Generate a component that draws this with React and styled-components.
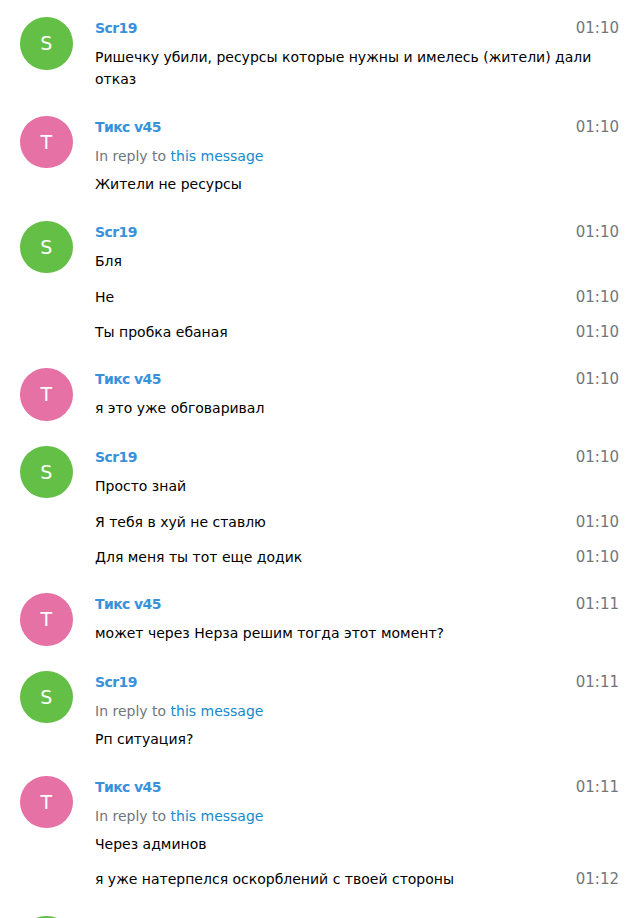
import React from "react";
import styled, { createGlobalStyle } from "styled-components";

const GlobalStyle = createGlobalStyle`
   body {
      margin: 0;
      background: #fff;
      font: 14px/22.5px "DejaVu Sans", "Noto Sans", sans-serif;
      color: #000;
   }
`;

const messages = [
   { from: "Scr19", color: "#64bf47", time: "01:10", text: "Ришечку убили, ресурсы которые нужны и имелесь (жители) дали отказ" },
   { from: "Тикс v45", color: "#e671a5", time: "01:10", reply: true, text: "Жители не ресурсы" },
   { from: "Scr19", color: "#64bf47", time: "01:10", text: "Бля" },
   { joined: true, time: "01:10", text: "Не" },
   { joined: true, time: "01:10", text: "Ты пробка ебаная" },
   { from: "Тикс v45", color: "#e671a5", time: "01:10", text: "я это уже обговаривал" },
   { from: "Scr19", color: "#64bf47", time: "01:10", text: "Просто знай" },
   { joined: true, time: "01:10", text: "Я тебя в хуй не ставлю" },
   { joined: true, time: "01:10", text: "Для меня ты тот еще додик" },
   { from: "Тикс v45", color: "#e671a5", time: "01:11", text: "может через Нерза решим тогда этот момент?" },
   { from: "Scr19", color: "#64bf47", time: "01:11", reply: true, text: "Рп ситуация?" },
   { from: "Тикс v45", color: "#e671a5", time: "01:11", reply: true, text: "Через админов" },
   { joined: true, time: "01:12", text: "я уже натерпелся оскорблений с твоей стороны" },
   // next message, only the top of its userpic shows
   { from: "Scr19", color: "#64bf47", partial: true },
];

const initials = (name) => (name[0] === "Т" ? "T" : name[0]);

const App = () => {
   return (
      <>
         <GlobalStyle />
         <History>
            {messages.map((m, index) => (
               <Message key={index} $joined={m.joined}>
                  {!m.joined && <Userpic $color={m.color}>{m.partial ? "" : initials(m.from)}</Userpic>}
                  {!m.partial && (
                     <Body $joined={m.joined}>
                        {m.joined ? (
                           <TextRow>
                              <Text>{m.text}</Text>
                              <Time>{m.time}</Time>
                           </TextRow>
                        ) : (
                           <>
                              <FromRow>
                                 <FromName>{m.from}</FromName>
                                 <Time>{m.time}</Time>
                              </FromRow>
                              {m.reply && (
                                 <ReplyTo>
                                    In reply to <a href="#">this message</a>
                                 </ReplyTo>
                              )}
                              <Text>{m.text}</Text>
                           </>
                        )}
                     </Body>
                  )}
               </Message>
            ))}
         </History>
      </>
   );
};

const History = styled.div`
   padding: 4.5px 25px 0 20px;
   height: 918px;
   overflow: hidden;
   box-sizing: border-box;
`;

const Message = styled.div`
   display: flex;
   align-items: flex-start;
   padding: 12.5px 0;
   margin-top: ${(p) => (p.$joined ? "-12.5px" : "0")};
`;

const Userpic = styled.div`
   flex: 0 0 52.5px;
   width: 52.5px;
   height: 52.5px;
   border-radius: 50%;
   background-color: ${(p) => p.$color};
   color: #fff;
   display: flex;
   align-items: center;
   justify-content: center;
   font-size: 19px;
   line-height: 1;
   margin-right: 22.5px;
`;

const Body = styled.div`
   flex: 1;
   min-width: 0;
   margin-left: ${(p) => (p.$joined ? "75px" : "0")};
`;

const FromRow = styled.div`
   display: flex;
   justify-content: space-between;
   padding-bottom: 6.25px;
`;

const FromName = styled.div`
   color: #3892db;
   font-weight: 700;
   letter-spacing: -0.6px;
`;

const Time = styled.div`
   color: #70777b;
   flex: none;
   margin-left: 12px;
   font-size: 15px;
`;

const ReplyTo = styled.div`
   color: #70777b;
   padding-bottom: 6.25px;

   a {
      color: #168acd;
      text-decoration: none;
   }
`;

const TextRow = styled.div`
   display: flex;
   justify-content: space-between;
`;

const Text = styled.div`
   word-wrap: break-word;
   line-height: 22.5px;
`;

export default App;
